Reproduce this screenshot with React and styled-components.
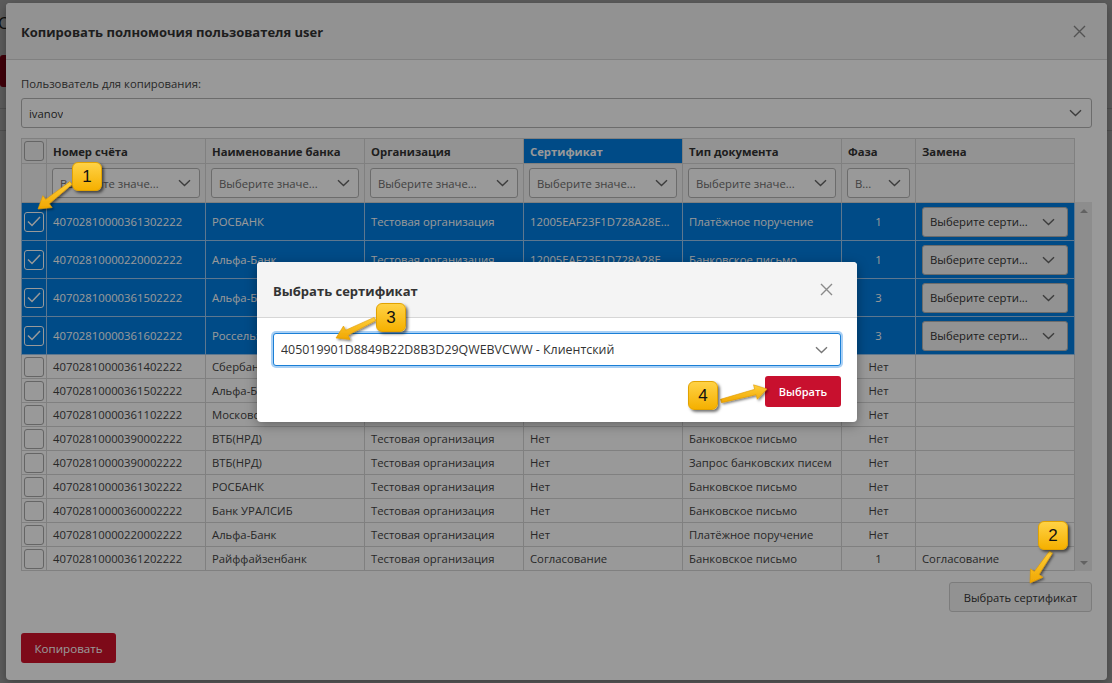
import React from 'react'
import styled, { createGlobalStyle } from 'styled-components'

const GlobalStyle = createGlobalStyle`
  html, body { margin: 0; padding: 0; }
  body {
    font-family: "Open Sans", "Liberation Sans", sans-serif;
    font-size: 11.3px;
    color: #333;
    background: #fff;
    overflow: hidden;
  }
  * { box-sizing: border-box; }
`

const BLUE = '#007de1'

const Page = styled.div`
  position: relative;
  width: 1112px;
  height: 683px;
  overflow: hidden;
  background: #fff;
`

const PageContent = styled.div`
  display: flex;
  flex-direction: column;
  gap: 21px;
  padding: 12px 0 0 0;
`

const PageTitle = styled.div`
  font-size: 16px;
  color: #222;
  margin-left: -2px;
`

const PageButton = styled.div`
  width: 120px;
  height: 32px;
  background: #b3001b;
  border-radius: 3px;
`

const PageLine = styled.div`
  height: 1px;
  background: #ddd;
`

const Backdrop = styled.div`
  position: absolute;
  inset: 0;
  background: rgba(0, 0, 0, 0.4);
  display: flex;
  padding: 3px 5px 3px 6px;
`

const Dialog = styled.div`
  width: 1101px;
  height: 677px;
  background: #fff;
  border-radius: 4px;
  display: flex;
  flex-direction: column;
  box-shadow: 0 3px 10px rgba(0, 0, 0, 0.3);
`

const Header = styled.div`
  height: ${p => p.$h}px;
  flex-shrink: 0;
  background: #f4f4f4;
  border-bottom: 1px solid #d6d6d6;
  border-radius: 4px 4px 0 0;
  display: flex;
  align-items: center;
  justify-content: space-between;
  padding: 0 ${p => p.$pr}px 0 ${p => p.$pl}px;
`

const Title = styled.div`
  font-size: 13px;
  font-weight: 700;
  color: #333;
  padding-top: 2px;
`

const Body = styled.div`
  flex: 1;
  display: flex;
  flex-direction: column;
  padding: 16px 15px 16px 15px;
`

const Label = styled.div`
  line-height: 16px;
  color: #444;
  margin-bottom: 6px;
`

const Select = styled.div`
  height: ${p => p.$h || 30}px;
  border: 1px solid ${p => (p.$focus ? '#1a7fd6' : '#b5b5b5')};
  box-shadow: ${p => (p.$focus ? '0 0 0 2px #a9d0f5' : 'none')};
  border-radius: 3px;
  background: ${p => p.$bg || '#fff'};
  display: flex;
  align-items: center;
  justify-content: space-between;
  gap: 6px;
  padding: 0 ${p => p.$pr || 10}px 0 7px;
  color: ${p => p.$muted ? '#6e6e6e' : '#333'};
  font-size: ${p => p.$fs || 11.3}px;
  min-width: 0;
`

const SelectText = styled.span`
  white-space: nowrap;
  overflow: hidden;
  text-overflow: ellipsis;
  min-width: 0;
`

const TableWrap = styled.div`
  margin-top: 10px;
  display: flex;
`

const Table = styled.table`
  width: 1053px;
  border-collapse: collapse;
  table-layout: fixed;
`

const Th = styled.th`
  height: 25px;
  background: ${p => (p.$active ? BLUE : '#f5f5f5')};
  color: ${p => (p.$active ? '#fff' : '#333')};
  border: 1px solid #d6d6d6;
  text-align: left;
  padding: 0 6px;
  font-weight: 700;
  font-size: 11.3px;
  white-space: nowrap;
`

const FilterCell = styled.td`
  height: 39px;
  background: #f5f5f5;
  border: 1px solid #d6d6d6;
  padding: 0 5px;
`

const Row = styled.tr`
  height: ${p => (p.$tall ? 38 : 24)}px;
  background: ${p => (p.$sel ? BLUE : '#fff')};
  color: ${p => (p.$sel ? '#fff' : '#444')};
`

const Td = styled.td`
  border: 1px solid ${p => (p.$sel ? '#9cc6ee' : '#d6d6d6')};
  padding: 0 ${p => (p.$pad ?? 6)}px;
  white-space: nowrap;
  overflow: hidden;
  text-overflow: ellipsis;
  text-align: ${p => (p.$center ? 'center' : 'left')};
`

const Check = styled.div`
  width: 20px;
  height: 20px;
  margin: 0 auto;
  border-radius: 3px;
  border: 1px solid ${p => (p.$on ? '#fff' : '#a8a8a8')};
  background: ${p => (p.$on ? 'transparent' : p.$head ? '#f5f5f5' : '#fff')};
  display: flex;
  align-items: center;
  justify-content: center;
`

const Scroll = styled.div`
  width: 18px;
  margin-top: 64px;
  background: #ececec;
  display: flex;
  flex-direction: column;
  justify-content: space-between;
  align-items: center;
  padding: 7px 0 6px;
`

const ScrollArrow = styled.div`
  width: 0;
  height: 0;
  border-left: 4px solid transparent;
  border-right: 4px solid transparent;
  ${p => (p.$down ? 'border-top: 4px solid #a3a3a3;' : 'border-bottom: 4px solid #a3a3a3;')}
`

const Button = styled.button`
  height: ${p => p.$h || 30}px;
  width: ${p => p.$w}px;
  border-radius: 3px;
  font-family: inherit;
  font-size: ${p => p.$fs || 11.2}px;
  font-weight: ${p => p.$fw || 400};
  padding: 0;
  cursor: pointer;
  align-self: ${p => p.$align || 'flex-start'};
  margin-top: ${p => p.$mt || 0}px;
  background: ${p => (p.$red ? p.$red : '#f4f4f4')};
  color: ${p => (p.$red ? '#fff' : '#333')};
  border: 1px solid ${p => (p.$red ? 'transparent' : '#cfcfcf')};
`

const Overlay = styled.div`
  position: absolute;
  inset: 0;
  background: rgba(0, 0, 0, 0.4);
`

const Modal = styled.div`
  position: absolute;
  left: 257px;
  top: 262px;
  width: 600px;
  height: 160px;
  background: #fff;
  border-radius: 4px;
  display: flex;
  flex-direction: column;
  box-shadow: 0 3px 12px rgba(0, 0, 0, 0.35);
`

const ModalBody = styled.div`
  display: flex;
  flex-direction: column;
  padding: 15px 16px 15px;
`

const Callouts = styled.div`
  position: absolute;
  inset: 0;
  pointer-events: none;
`

const Badge = styled.div`
  position: absolute;
  left: ${p => p.$x}px;
  top: ${p => p.$y}px;
  width: 30px;
  height: 29px;
  border-radius: 6px;
  background: linear-gradient(#ffd246, #f5b000);
  border: 1px solid #e2a200;
  box-shadow: 2px 2px 3px rgba(0, 0, 0, 0.55);
  display: flex;
  align-items: center;
  justify-content: center;
  font-family: "Liberation Sans", Arial, sans-serif;
  font-size: 17px;
  color: #111;
`

const Chevron = ({ color = '#666' }) => (
  <svg width="13" height="8" viewBox="0 0 13 8" style={{ flexShrink: 0 }}>
    <path d="M1 1.2 L6.5 6.5 L12 1.2" fill="none" stroke={color} strokeWidth="1.4" />
  </svg>
)

const CloseX = () => (
  <svg width="13" height="13" viewBox="0 0 13 13">
    <path d="M1 1 L12 12 M12 1 L1 12" stroke="#8a8a8a" strokeWidth="1.4" fill="none" />
  </svg>
)

const Tick = () => (
  <svg width="14" height="11" viewBox="0 0 14 11">
    <path d="M1 5.5 L5 9.5 L13 1" fill="none" stroke="#fff" strokeWidth="1.5" />
  </svg>
)

const arrowPoints = (x1, y1, x2, y2) => {
  const dx = x2 - x1
  const dy = y2 - y1
  const len = Math.hypot(dx, dy)
  const ux = dx / len
  const uy = dy / len
  const nx = -uy
  const ny = ux
  const hl = 12
  const bx = x2 - ux * hl
  const by = y2 - uy * hl
  const p = (x, y, k) => `${(x + nx * k).toFixed(1)},${(y + ny * k).toFixed(1)}`
  return [p(x1, y1, 1.8), p(bx, by, 2.8), p(bx, by, 7.5), `${x2},${y2}`, p(bx, by, -7.5), p(bx, by, -2.8), p(x1, y1, -1.8)].join(' ')
}

const arrows = [
  [71, 183, 38, 209],
  [1051, 552, 1030, 583],
  [375, 319, 336, 338],
  [721, 401, 767, 389],
]

const badges = [
  { n: 1, x: 72, y: 162 },
  { n: 2, x: 1038, y: 521 },
  { n: 3, x: 376, y: 303 },
  { n: 4, x: 688, y: 381 },
]

const columns = [
  { w: 25 },
  { w: 159, title: 'Номер счёта', filter: 'Выберите значе...' },
  { w: 159, title: 'Наименование банка', filter: 'Выберите значе...' },
  { w: 159, title: 'Организация', filter: 'Выберите значе...' },
  { w: 159, title: 'Сертификат', filter: 'Выберите значе...', active: true },
  { w: 159, title: 'Тип документа', filter: 'Выберите значе...' },
  { w: 74, title: 'Фаза', filter: 'В...' },
  { w: 159, title: 'Замена' },
]

const CERT = '12005EAF23F1D728A28E...'
const ORG = 'Тестовая организация'

const rows = [
  { sel: true, acc: '40702810000361302222', bank: 'РОСБАНК', cert: CERT, doc: 'Платёжное поручение', phase: '1' },
  { sel: true, acc: '40702810000220002222', bank: 'Альфа-Банк', cert: CERT, doc: 'Банковское письмо', phase: '1' },
  { sel: true, acc: '40702810000361502222', bank: 'Альфа-Банк', cert: CERT, doc: 'Банковское письмо', phase: '3' },
  { sel: true, acc: '40702810000361602222', bank: 'Россельхозбанк', cert: CERT, doc: 'Платёжное поручение', phase: '3' },
  { acc: '40702810000361402222', bank: 'Сбербанк', cert: 'Нет', doc: 'Банковское письмо', phase: 'Нет' },
  { acc: '40702810000361502222', bank: 'Альфа-Банк', cert: 'Нет', doc: 'Банковское письмо', phase: 'Нет' },
  { acc: '40702810000361102222', bank: 'Московский кредитный банк', cert: 'Нет', doc: 'Банковское письмо', phase: 'Нет' },
  { acc: '40702810000390002222', bank: 'ВТБ(НРД)', cert: 'Нет', doc: 'Банковское письмо', phase: 'Нет' },
  { acc: '40702810000390002222', bank: 'ВТБ(НРД)', cert: 'Нет', doc: 'Запрос банковских писем', phase: 'Нет' },
  { acc: '40702810000361302222', bank: 'РОСБАНК', cert: 'Нет', doc: 'Банковское письмо', phase: 'Нет' },
  { acc: '40702810000360002222', bank: 'Банк УРАЛСИБ', cert: 'Нет', doc: 'Банковское письмо', phase: 'Нет' },
  { acc: '40702810000220002222', bank: 'Альфа-Банк', cert: 'Нет', doc: 'Платёжное поручение', phase: 'Нет' },
  { acc: '40702810000361202222', bank: 'Райффайзенбанк', cert: 'Согласование', doc: 'Банковское письмо', phase: '1', swap: 'Согласование' },
]

export default function App() {
  return (
    <Page>
      <GlobalStyle />
      <PageContent>
        <PageTitle>Справочник пользователей</PageTitle>
        <PageButton />
        <PageLine />
        <PageLine />
      </PageContent>

      <Backdrop>
        <Dialog>
          <Header $h={57} $pl={15} $pr={21}>
            <Title>Копировать полномочия пользователя user</Title>
            <CloseX />
          </Header>
          <Body>
            <Label>Пользователь для копирования:</Label>
            <Select $pr={9}>
              <SelectText>ivanov</SelectText>
              <Chevron />
            </Select>

            <TableWrap>
              <Table>
                <colgroup>
                  {columns.map((c, i) => <col key={i} style={{ width: c.w }} />)}
                </colgroup>
                <thead>
                  <tr>
                    {columns.map((c, i) => (
                      <Th key={i} $active={c.active} style={i === 0 ? { padding: 0 } : undefined}>
                        {i === 0 ? <Check $head /> : c.title}
                      </Th>
                    ))}
                  </tr>
                  <tr>
                    {columns.map((c, i) => (
                      <FilterCell key={i}>
                        {c.filter && (
                          <Select $muted $pr={8}>
                            <SelectText>{c.filter}</SelectText>
                            <Chevron />
                          </Select>
                        )}
                      </FilterCell>
                    ))}
                  </tr>
                </thead>
                <tbody>
                  {rows.map((r, i) => (
                    <Row key={i} $sel={r.sel} $tall={r.sel}>
                      <Td $sel={r.sel} $pad={0}>
                        <Check $on={r.sel}>{r.sel && <Tick />}</Check>
                      </Td>
                      <Td $sel={r.sel}>{r.acc}</Td>
                      <Td $sel={r.sel}>{r.bank}</Td>
                      <Td $sel={r.sel}>{ORG}</Td>
                      <Td $sel={r.sel}>{r.cert}</Td>
                      <Td $sel={r.sel}>{r.doc}</Td>
                      <Td $sel={r.sel} $center>{r.phase}</Td>
                      <Td $sel={r.sel}>
                        {r.sel ? (
                          <Select $bg="#f3f3f3" $pr={12}>
                            <SelectText>Выберите серти...</SelectText>
                            <Chevron />
                          </Select>
                        ) : (
                          r.swap
                        )}
                      </Td>
                    </Row>
                  ))}
                </tbody>
              </Table>
              <Scroll>
                <ScrollArrow />
                <ScrollArrow $down />
              </Scroll>
            </TableWrap>

            <Button $w={143} $mt={11} $align="flex-end">Выбрать сертификат</Button>
            <Button $w={95} $mt={21} $fs={11.6} $red="#d0112b">Копировать</Button>
          </Body>
        </Dialog>
      </Backdrop>

      <Overlay />
      <Modal>
        <Header $h={56} $pl={16} $pr={24}>
          <Title>Выбрать сертификат</Title>
          <CloseX />
        </Header>
        <ModalBody>
          <Select $h={33} $focus $pr={12} $fs={12.4}>
            <SelectText>405019901D8849B22D8B3D29QWEBVCWW - Клиентский</SelectText>
            <Chevron color="#777" />
          </Select>
          <Button $w={76} $h={31} $mt={10} $fw={600} $fs={11} $align="flex-end" $red="#c8102e">Выбрать</Button>
        </ModalBody>
      </Modal>

      <Callouts>
        <svg width="1112" height="683" style={{ position: 'absolute', left: 0, top: 0 }}>
          <defs>
            <linearGradient id="arrowFill" x1="0" y1="0" x2="0" y2="1">
              <stop offset="0" stopColor="#ffcf3a" />
              <stop offset="1" stopColor="#f0a600" />
            </linearGradient>
            <filter id="arrowShadow" x="-20%" y="-20%" width="140%" height="140%">
              <feDropShadow dx="1.5" dy="1.5" stdDeviation="1.2" floodColor="#000" floodOpacity="0.5" />
            </filter>
          </defs>
          {arrows.map((a, i) => (
            <polygon key={i} points={arrowPoints(...a)} fill="url(#arrowFill)" stroke="#e09a00" strokeWidth="0.6" filter="url(#arrowShadow)" />
          ))}
        </svg>
        {badges.map(b => (
          <Badge key={b.n} $x={b.x} $y={b.y}>{b.n}</Badge>
        ))}
      </Callouts>
    </Page>
  )
}
